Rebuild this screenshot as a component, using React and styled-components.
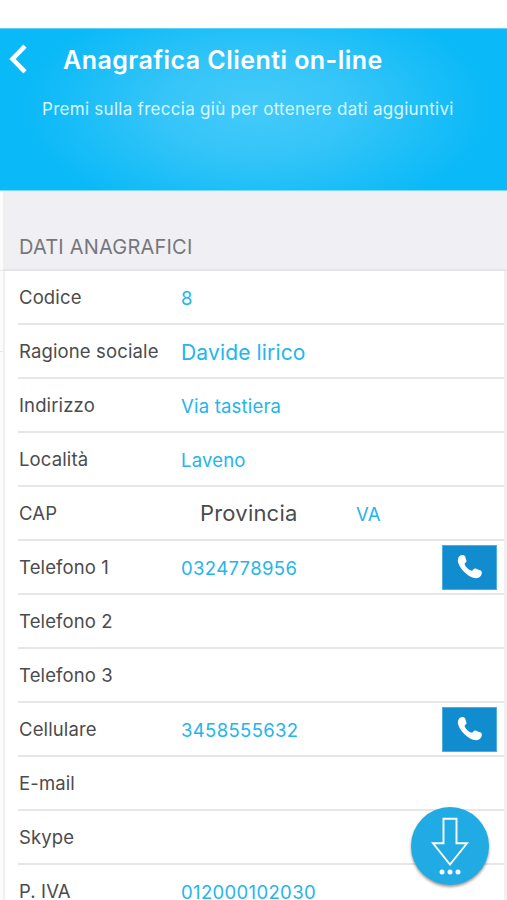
import React from "react";
import styled, { createGlobalStyle } from "styled-components";

const rows = [
  { label: "Codice", value: "8" },
  { label: "Ragione sociale", value: "Davide lirico", size: 21, space: 0.15 },
  { label: "Indirizzo", value: "Via tastiera", space: 0.2 },
  { label: "Località", value: "Laveno", space: 0.2 },
  { label: "CAP", province: "VA" },
  { label: "Telefono 1", value: "0324778956", phone: true },
  { label: "Telefono 2" },
  { label: "Telefono 3" },
  { label: "Cellulare", value: "3458555632", phone: true },
  { label: "E-mail" },
  { label: "Skype" },
  { label: "P. IVA", value: "012000102030" },
];

const PhoneIcon = () => (
  <svg width="26" height="27" viewBox="0 0 26 27" fill="#fff">
    <path d="M1.700 3.200C2.600 1.500 4.800.6 6.700 1.200c1.400.4 1.600 1.400 2 3 .5 1.700 1.300 2.700.5 3.800-.6.900-1.600 1.100-1.500 2 .3 2.400 4 6.200 6.900 6.700 1.200.2 1.400-1.300 2.700-1.900 1.200-.6 2 .3 3.600.8 1.700.6 3.600.8 3.900 2.400.4 2.100-1.200 5-3.200 5.800-2.500 1-7.200-.2-10.500-2.600C6.400 17.800 2.700 13.600 1.300 9 .6 6.700.7 4.900 1.700 3.200z" />
  </svg>
);

const ArrowIcon = () => (
  <svg width="38" height="68" viewBox="0 0 38 68" fill="none">
    <path
      d="M12.500 8.700H25.500V33.300H36L19 54.500L2 33.300H12.500Z"
      stroke="#fff"
      strokeWidth="1.900"
    />
    <circle cx="11" cy="62" r="2.500" fill="#fff" />
    <circle cx="19" cy="62" r="2.500" fill="#fff" />
    <circle cx="27" cy="62" r="2.500" fill="#fff" />
  </svg>
);

const App = () => (
  <Page>
    <GlobalStyle />
    <StatusBar />
    <Header>
      <TitleRow>
        <BackButton aria-label="Indietro">
          <svg width="20" height="30" viewBox="0 0 20 30" fill="none">
            <path d="M16 2.200L3.500 15L16 27.800" stroke="#fff" strokeWidth="4.600" />
          </svg>
        </BackButton>
        <Title>Anagrafica Clienti on-line</Title>
      </TitleRow>
      <Subtitle>Premi sulla freccia giù per ottenere dati aggiuntivi</Subtitle>
    </Header>
    <Body>
      <Gutter>
        <GutterCell $height={80} />
        <GutterCell $height={81} />
      </Gutter>
      <Content>
        <SectionTitle>DATI ANAGRAFICI</SectionTitle>
        <List>
          {rows.map((row) => (
            <Row key={row.label}>
              <Label>{row.label}</Label>
              {row.value && (
                <Value $size={row.size} $space={row.space}>
                  {row.value}
                </Value>
              )}
              {row.province && (
                <Province>
                  <ProvinceLabel>Provincia</ProvinceLabel>
                  <Value>{row.province}</Value>
                </Province>
              )}
              {row.phone && (
                <CallButton aria-label="Chiama">
                  <PhoneIcon />
                </CallButton>
              )}
            </Row>
          ))}
        </List>
      </Content>
    </Body>
    <MoreButton aria-label="Dati aggiuntivi">
      <ArrowIcon />
    </MoreButton>
  </Page>
);

export default App;

const GlobalStyle = createGlobalStyle`
  * {
    box-sizing: border-box;
  }
  body {
    margin: 0;
    overflow: hidden;
    background: #fff;
    font-family: Inter, "Liberation Sans", sans-serif;
  }
`;

const Page = styled.div`
  position: relative;
  display: flex;
  flex-direction: column;
  width: 507px;
  height: 900px;
  overflow: hidden;
`;

const StatusBar = styled.div`
  flex: none;
  height: 28px;
  background: #fff;
`;

const Header = styled.header`
  flex: none;
  height: 163px;
  border-top: 1px solid #5dd0fa;
  border-bottom: 1px solid #7bdafc;
  background: radial-gradient(
    ellipse 235px 118px at 257px 78px,
    #43caf9 0%,
    #36c5f8 40%,
    #1bbef7 75%,
    #0ab9f7 100%
  );
`;

const TitleRow = styled.div`
  display: flex;
  align-items: center;
  height: 60px;
`;

const BackButton = styled.button`
  display: flex;
  width: 63px;
  padding: 0 0 0 9px;
  border: 0;
  background: none;
`;

const Title = styled.h1`
  margin: 2px 0 0;
  color: #fff;
  font-size: 25px;
  font-weight: 600;
  letter-spacing: 0.45px;
  white-space: nowrap;
`;

const Subtitle = styled.p`
  margin: 9px 0 0 42px;
  color: #d9f7ff;
  font-size: 17px;
  line-height: 22px;
  letter-spacing: 0.28px;
  white-space: nowrap;
`;

const Body = styled.div`
  display: flex;
  flex: 1;
  min-height: 0;
`;

const Gutter = styled.div`
  width: 3px;
  background: #fcfcfd;
`;

const GutterCell = styled.div`
  height: ${(props) => props.$height}px;
  border-bottom: 1px solid #e6e6e9;
`;

const Content = styled.main`
  flex: 1;
  background: #efeff4;
`;

const SectionTitle = styled.h2`
  display: flex;
  align-items: flex-end;
  height: 80px;
  margin: 0;
  padding: 0 0 11px 16px;
  border-bottom: 2px solid #e5e5e8;
  color: #77777b;
  font-size: 20px;
  font-weight: 400;
  line-height: 22px;
  letter-spacing: 0.2px;
`;

const List = styled.div`
  margin: 0 3px 0 2px;
  padding-left: 13px;
  background: #fff;
`;

const Row = styled.div`
  display: flex;
  align-items: center;
  height: 54px;
  padding-left: 1px;
  border-bottom: 2px solid #e6e6e8;
`;

const Label = styled.div`
  width: 162px;
  padding-bottom: 1px;
  color: #4b4b4d;
  font-size: 18.5px;
  line-height: 18px;
  letter-spacing: 0.13px;
  white-space: nowrap;
`;

const Value = styled.div`
  padding-top: 2px;
  color: #24b5ec;
  font-size: ${(props) => props.$size || 18.5}px;
  line-height: 17px;
  letter-spacing: ${(props) => props.$space || 0.35}px;
  white-space: nowrap;
`;

const Province = styled.div`
  display: flex;
  align-items: center;
  padding-left: 19px;
`;

const ProvinceLabel = styled.div`
  width: 156px;
  color: #4b4b4d;
  font-size: 22px;
  line-height: 24px;
  letter-spacing: 0.2px;
`;

const CallButton = styled.button`
  display: flex;
  align-items: center;
  justify-content: center;
  width: 55px;
  height: 45px;
  margin: 0 7px 0 auto;
  padding: 0;
  border: 1px solid #4eaedc;
  background: #118ccf;
`;

const MoreButton = styled.button`
  position: absolute;
  right: 18px;
  bottom: 15px;
  display: flex;
  align-items: flex-start;
  justify-content: center;
  width: 78px;
  height: 78px;
  padding: 3px 0 0;
  border: 0;
  border-radius: 50%;
  background: #20abe5;
  box-shadow: 0 2px 3px rgba(0, 0, 0, 0.4);
`;
